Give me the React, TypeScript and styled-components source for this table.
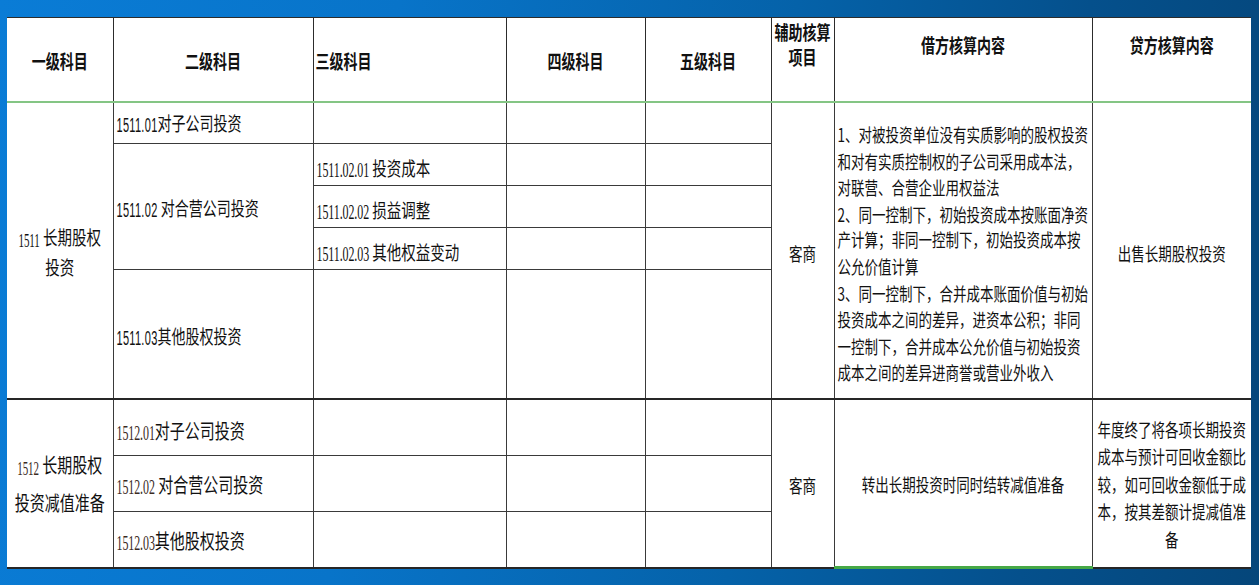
import styled, { createGlobalStyle } from 'styled-components'

const GlobalStyle = createGlobalStyle`
  html, body { margin: 0; padding: 0; }
  body {
    font-family: "Noto Sans CJK SC", "Noto Sans", sans-serif;
    color: #111;
  }
`

const Page = styled.div`
  width: 1259px;
  height: 585px;
  box-sizing: border-box;
  padding: 17px 8px 18px 7px;
  overflow: hidden;
  background: linear-gradient(97deg, #0a7cd6 0%, #0874c9 30%, #0562a9 60%, #05508c 82%, #05467a 100%);
`

const Sheet = styled.table`
  width: 1244px;
  table-layout: fixed;
  border-collapse: collapse;
  background: #fff;
  border-top: 1px solid #1e1e1e;
  border-bottom: 2px solid #262626;
`

const Col = styled.col<{ $w: number }>`
  width: ${p => p.$w}px;
`

const Row = styled.tr<{ $h: number }>`
  height: ${p => p.$h}px;
`

type Edge = 'left' | 'right'

const Th = styled.th<{ $align?: string; $valign?: string; $pt?: number; $edge?: Edge }>`
  padding: ${p => p.$pt ?? 0}px 2px 0;
  border: 1px solid #2c2c2c;
  border-bottom: 2px solid #84c584;
  text-align: ${p => p.$align ?? 'center'};
  vertical-align: ${p => p.$valign ?? 'middle'};
  ${p => p.$edge === 'left' && 'border-left: none;'}
  ${p => p.$edge === 'right' && 'border-right: none;'}
`

const Td = styled.td<{ $align?: string; $pt?: number; $sep?: boolean; $green?: boolean; $edge?: Edge }>`
  padding: ${p => p.$pt ?? 0}px 3px 0;
  border: 1px solid #3a3a3a;
  text-align: ${p => p.$align ?? 'left'};
  vertical-align: middle;
  ${p => p.$sep && 'border-top: 2px solid #262626;'}
  ${p => p.$green && 'border-bottom: 3px solid #46a846;'}
  ${p => p.$edge === 'left' && 'border-left: none;'}
  ${p => p.$edge === 'right' && 'border-right: none;'}
`

// the source picture is stretched vertically, so every text block is too
const Tall = styled.div<{ $size: number; $lh: number; $bold?: boolean }>`
  font-size: ${p => p.$size}px;
  line-height: ${p => p.$lh}px;
  font-weight: ${p => (p.$bold ? 700 : 400)};
  white-space: nowrap;
  transform: scaleY(1.35);
`

// $plain: the upright sans digits of the 1511 codes; otherwise narrow serif digits
const Num = styled.span<{ $plain?: boolean; $size: number; $tint?: string }>`
  display: inline-block;
  font-family: ${p => (p.$plain ? '"Liberation Sans", sans-serif' : '"Liberation Serif", serif')};
  font-size: ${p => p.$size}px;
  letter-spacing: ${p => (p.$plain ? '0.3px' : '-0.1px')};
  color: ${p => p.$tint ?? 'inherit'};
  transform: scaleY(1.3);
`

const debitLines = [
  '1、对被投资单位没有实质影响的股权投资',
  '和对有实质控制权的子公司采用成本法，',
  '对联营、合营企业用权益法',
  '2、同一控制下，初始投资成本按账面净资',
  '产计算；非同一控制下，初始投资成本按',
  '公允价值计算',
  '3、同一控制下，合并成本账面价值与初始',
  '投资成本之间的差异，进资本公积；非同',
  '一控制下，合并成本公允价值与初始投资',
  '成本之间的差异进商誉或营业外收入',
]

const creditLines = [
  '年度终了将各项长期投资',
  '成本与预计可回收金额比',
  '较，如可回收金额低于成',
  '本，按其差额计提减值准',
  '备',
]

const Lines = ({ items }: { items: string[] }) => (
  <>
    {items.map((t, i) => (
      <span key={i}>
        {t}
        {i < items.length - 1 && <br />}
      </span>
    ))}
  </>
)

const BROWN = '#3a2a1e'

export default function App() {
  return (
    <Page>
      <GlobalStyle />
      <Sheet>
        <colgroup>
          <Col $w={106} />
          <Col $w={200} />
          <Col $w={193} />
          <Col $w={139} />
          <Col $w={126} />
          <Col $w={63} />
          <Col $w={258} />
          <Col $w={159} />
        </colgroup>
        <thead>
          <Row $h={84}>
            <Th $edge="left" $pt={4}>
              <Tall $size={14} $lh={19} $bold>一级科目</Tall>
            </Th>
            <Th $pt={4}>
              <Tall $size={14} $lh={19} $bold>二级科目</Tall>
            </Th>
            <Th $align="left" $pt={4}>
              <Tall $size={14} $lh={19} $bold>三级科目</Tall>
            </Th>
            <Th $pt={4}>
              <Tall $size={14} $lh={19} $bold>四级科目</Tall>
            </Th>
            <Th $pt={4}>
              <Tall $size={14} $lh={19} $bold>五级科目</Tall>
            </Th>
            <Th $valign="top" $pt={8}>
              <Tall $size={14} $lh={19} $bold>
                辅助核算
                <br />
                项目
              </Tall>
            </Th>
            <Th $valign="top" $pt={18}>
              <Tall $size={14} $lh={19} $bold>借方核算内容</Tall>
            </Th>
            <Th $valign="top" $pt={18} $edge="right">
              <Tall $size={14} $lh={19} $bold>贷方核算内容</Tall>
            </Th>
          </Row>
        </thead>
        <tbody>
          <Row $h={42}>
            <Td rowSpan={5} $align="center" $edge="left" $pt={4}>
              <Tall $size={14.5} $lh={20}>
                <Num $size={11}>1511</Num> 长期股权
                <br />
                投资
              </Tall>
            </Td>
            <Td $pt={4}>
              <Tall $size={14} $lh={19}>
                <Num $plain $size={11}>1511.01</Num>对子公司投资
              </Tall>
            </Td>
            <Td />
            <Td />
            <Td />
            <Td rowSpan={5} $align="center" $pt={6}>
              <Tall $size={13.5} $lh={19}>客商</Tall>
            </Td>
            <Td rowSpan={5} $pt={8}>
              <Tall $size={13.5} $lh={19.6}>
                <Lines items={debitLines} />
              </Tall>
            </Td>
            <Td rowSpan={5} $align="center" $edge="right" $pt={6}>
              <Tall $size={13.5} $lh={19}>出售长期股权投资</Tall>
            </Td>
          </Row>
          <Row $h={42}>
            <Td rowSpan={3} $pt={6}>
              <Tall $size={14} $lh={19}>
                <Num $plain $size={11}>1511.02</Num> 对合营公司投资
              </Tall>
            </Td>
            <Td $pt={8}>
              <Tall $size={14.5} $lh={19}>
                <Num $size={12}>1511.02.01</Num> 投资成本
              </Tall>
            </Td>
            <Td />
            <Td />
          </Row>
          <Row $h={42}>
            <Td $pt={8}>
              <Tall $size={14.5} $lh={19}>
                <Num $size={12}>1511.02.02</Num> 损益调整
              </Tall>
            </Td>
            <Td />
            <Td />
          </Row>
          <Row $h={42}>
            <Td $pt={8}>
              <Tall $size={14.5} $lh={19}>
                <Num $size={12}>1511.02.03</Num> 其他权益变动
              </Tall>
            </Td>
            <Td />
            <Td />
          </Row>
          <Row $h={129}>
            <Td $pt={8}>
              <Tall $size={14} $lh={19}>
                <Num $plain $size={11}>1511.03</Num>其他股权投资
              </Tall>
            </Td>
            <Td />
            <Td />
            <Td />
          </Row>

          <Row $h={57}>
            <Td rowSpan={3} $align="center" $edge="left" $sep $pt={2}>
              <Tall $size={15} $lh={26}>
                <Num $size={11} $tint={BROWN}>1512</Num> 长期股权
                <br />
                投资减值准备
              </Tall>
            </Td>
            <Td $sep $pt={10}>
              <Tall $size={15} $lh={20}>
                <Num $size={12} $tint={BROWN}>1512.01</Num>对子公司投资
              </Tall>
            </Td>
            <Td $sep />
            <Td $sep />
            <Td $sep />
            <Td rowSpan={3} $align="center" $sep $pt={4}>
              <Tall $size={13.5} $lh={19}>客商</Tall>
            </Td>
            <Td rowSpan={3} $align="center" $sep $green $pt={4}>
              <Tall $size={13.5} $lh={19}>转出长期投资时同时结转减值准备</Tall>
            </Td>
            <Td rowSpan={3} $align="center" $edge="right" $sep $pt={2}>
              <Tall $size={13.5} $lh={20.4}>
                <Lines items={creditLines} />
              </Tall>
            </Td>
          </Row>
          <Row $h={56}>
            <Td $pt={4}>
              <Tall $size={15} $lh={20}>
                <Num $size={12} $tint={BROWN}>1512.02</Num> 对合营公司投资
              </Tall>
            </Td>
            <Td />
            <Td />
            <Td />
          </Row>
          <Row $h={56}>
            <Td $pt={6}>
              <Tall $size={15} $lh={20}>
                <Num $size={12} $tint={BROWN}>1512.03</Num>其他股权投资
              </Tall>
            </Td>
            <Td />
            <Td />
            <Td />
          </Row>
        </tbody>
      </Sheet>
    </Page>
  )
}
